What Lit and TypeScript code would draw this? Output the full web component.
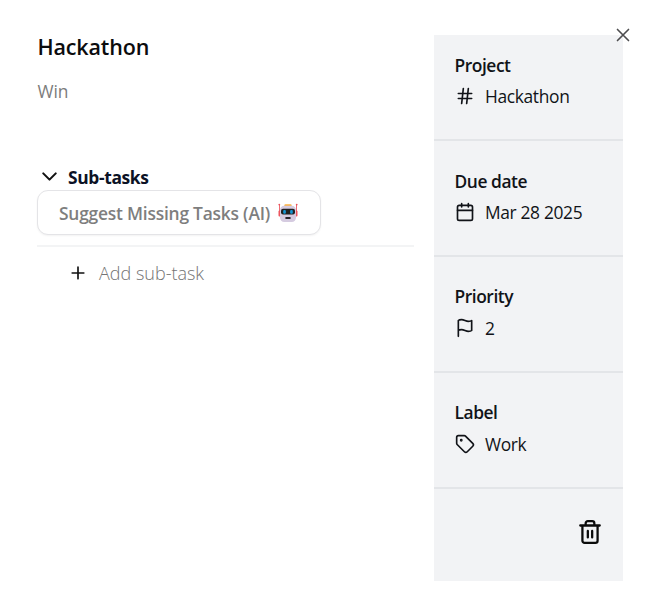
import { LitElement, html, css, svg } from "lit";
import { customElement, property } from "lit/decorators.js";

const icons: Record<string, unknown> = {
  hash: svg`<path d="M4 9h16M4 15h16M10 3 8 21M16 3l-2 18"/>`,
  calendar: svg`<rect x="3" y="4" width="18" height="18" rx="2"/><path d="M8 2v4M16 2v4M3 10h18"/>`,
  flag: svg`<path d="M4 15s1-1 4-1 5 2 8 2 4-1 4-1V3s-1 1-4 1-5-2-8-2-4 1-4 1zM4 22v-7"/>`,
  tag: svg`<path d="M12.586 2.586A2 2 0 0 0 11.172 2H4a2 2 0 0 0-2 2v7.172a2 2 0 0 0 .586 1.414l8.704 8.704a2.426 2.426 0 0 0 3.42 0l6.58-6.58a2.426 2.426 0 0 0 0-3.42z"/><circle cx="7.5" cy="7.5" r=".7" fill="currentColor"/>`,
  chevron: svg`<path d="m6 9 6 6 6-6"/>`,
  plus: svg`<path d="M5 12h14M12 5v14"/>`,
  close: svg`<path d="M18 6 6 18M6 6l12 12"/>`,
  trash: svg`<path d="M3 6h18M19 6v14a2 2 0 0 1-2 2H7a2 2 0 0 1-2-2V6M8 6V4a2 2 0 0 1 2-2h4a2 2 0 0 1 2 2v2M10 11v6M14 11v6"/>`,
};

@customElement("line-icon")
class LineIcon extends LitElement {
  @property() name = "hash";
  static styles = css`
    :host { display: block; flex: none; width: 20px; height: 20px; }
    svg { display: block; width: 100%; height: 100%; fill: none; stroke: currentColor;
      stroke-width: var(--stroke, 2); stroke-linecap: round; stroke-linejoin: round; }
  `;
  render() {
    return html`<svg viewBox="0 0 24 24">${icons[this.name]}</svg>`;
  }
}

@customElement("app-root")
class AppRoot extends LitElement {
  static styles = css`
    :host { display: block; position: relative; box-sizing: border-box; width: 657px; height: 614px;
      background: #fff; color: #111318; font: 17.4px/24px "Open Sans", "Noto Sans", sans-serif; }
    .dialog { display: flex; gap: 20px; padding: 35px 34px 0 37px; }
    .main { flex: 1; min-width: 0; }
    h1 { margin: 0; padding-left: 0.5px; font-size: 21.5px; line-height: 24px; font-weight: 600; letter-spacing: -0.15px; color: #0c0c0e; }
    .description { margin: 20px 0 0; padding-left: 0.5px; height: 24px; color: #7c7c7c; letter-spacing: -0.1px; }
    .subtasks { display: flex; align-items: center; margin-top: 62px; height: 25px; color: #0b1225;
      font-weight: 700; letter-spacing: -0.35px; }
    .subtasks span { height: 24px; margin-top: -2px; }
    .subtasks line-icon { width: 25px; height: 25px; margin: -2px 6px 0 0; color: #111; }
    .suggest { display: flex; align-items: center; box-sizing: border-box; width: 284px; height: 45px;
      padding: 0 22px 0 21px; margin: 0; border: 1px solid #e4e4e7; border-radius: 11px; background: #fff;
      box-shadow: 0 1px 2px #0000000d; color: #7e7e7e; font: inherit; font-weight: 600;
      letter-spacing: -0.22px; white-space: nowrap; }
    .suggest svg { flex: none; width: 20px; height: 20px; margin-left: auto; }
    .line { height: 2px; margin-top: 10px; background: #f3f4f5; }
    .add { display: flex; align-items: center; gap: 11px; margin-top: 14px; height: 24px; padding-left: 31px;
      color: #747474; font-size: 18px; font-weight: 300; letter-spacing: 0; }
    .add line-icon { color: #111; }
    aside { box-sizing: border-box; width: 189px; height: 546px; background: #f2f3f5; }
    .field { box-sizing: border-box; height: 116px; padding: 28px 21px 0 20.5px; border-bottom: 2px solid #e3e5e8; }
    .field:first-child { height: 106px; padding-top: 18px; }
    .field:nth-child(n + 3) { padding-top: 27px; }
    .field:nth-child(n + 3) .value { margin-top: 8px; }
    .label { font-weight: 600; letter-spacing: -0.45px; }
    .value { display: flex; align-items: center; gap: 10.5px; margin-top: 7px; letter-spacing: -0.35px; }
    .delete { display: flex; justify-content: flex-end; padding: 30px 20px 0; color: #0b0b0b; }
    .delete line-icon { width: 26px; height: 26px; --stroke: 2.1; }
    .close { position: absolute; top: 24px; left: 612px; width: 22px; height: 22px; color: #4d4d4f; --stroke: 1.8; }
  `;

  fields = [
    { label: "Project", icon: "hash", value: "Hackathon" },
    { label: "Due date", icon: "calendar", value: "Mar 28 2025" },
    { label: "Priority", icon: "flag", value: "2" },
    { label: "Label", icon: "tag", value: "Work" },
  ];

  render() {
    return html`
      <div class="dialog">
        <div class="main">
          <h1>Hackathon</h1>
          <p class="description">Win</p>
          <div class="subtasks"><line-icon name="chevron"></line-icon><span>Sub-tasks</span></div>
          <button class="suggest">
            <span>Suggest Missing Tasks (AI)</span>
            <svg viewBox="0 0 20 20">
              <path d="M1.5 1v12M18.5 1v12" stroke="#ef6b72" stroke-width="1"/>
              <rect x=".5" y="7.5" width="2.5" height="6" rx="1" fill="#ee555e"/>
              <rect x="17" y="7.5" width="2.5" height="6" rx="1" fill="#ee555e"/>
              <circle cx="1.3" cy="1.6" r=".9" fill="#e9505c"/><circle cx="18.7" cy="1.6" r=".9" fill="#e9505c"/>
              <rect x="6.3" y="1.2" width="7.4" height="3" rx="1.2" fill="#fbb040"/>
              <rect x="2" y="2.8" width="16" height="16.2" rx="4.2" fill="#d5cbe0"/>
              <rect x="3" y="5.8" width="14" height="5.8" rx="2" fill="#212121"/>
              <rect x="5.2" y="6.9" width="2.7" height="3.8" rx="1" fill="#1595d3"/>
              <rect x="12.1" y="6.9" width="2.7" height="3.8" rx="1" fill="#1595d3"/>
              <rect x="7.4" y="14" width="5.2" height="2" rx=".6" fill="#29252d"/>
            </svg>
          </button>
          <div class="line"></div>
          <div class="add"><line-icon name="plus"></line-icon><span>Add sub-task</span></div>
        </div>
        <aside>
          ${this.fields.map(
            (f) => html`<section class="field">
              <div class="label">${f.label}</div>
              <div class="value"><line-icon name=${f.icon}></line-icon><span>${f.value}</span></div>
            </section>`
          )}
          <div class="delete"><line-icon name="trash"></line-icon></div>
        </aside>
      </div>
      <line-icon class="close" name="close"></line-icon>
    `;
  }
}
